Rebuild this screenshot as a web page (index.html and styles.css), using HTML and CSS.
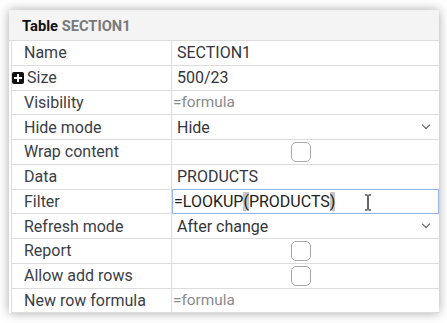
FILE: index.html
```html
<!DOCTYPE html>
<html lang="en">
  <head>
    <meta charset="UTF-8" />
    <title>Table SECTION1</title>
    <link rel="stylesheet" href="styles.css">
  </head>
  <body>
    <div class="panel">
      <div class="panel-header">
        <span class="title">Table</span> <span class="subtitle">SECTION1</span>
      </div>
      <div class="props">
        <div class="label">Name</div>
        <div class="value">SECTION1</div>

        <div class="label label-expand"><span class="plus"></span>Size</div>
        <div class="value">500/23</div>

        <div class="label">Visibility</div>
        <div class="value placeholder">=formula</div>

        <div class="label">Hide mode</div>
        <div class="value select">Hide<span class="chevron"></span></div>

        <div class="label">Wrap content</div>
        <div class="value check"><span class="box"></span></div>

        <div class="label">Data</div>
        <div class="value">PRODUCTS</div>

        <div class="label">Filter</div>
        <div class="value editing">=LOOKUP<span class="match">(</span>PRODUCTS<span class="match">)</span>
          <svg class="ibeam" width="8" height="17" viewBox="0 0 8 17">
            <path d="M1 1h2.5M4.5 1H7M4 1.5v14M1 16h2.5M4.5 16H7" stroke="#000" stroke-width="1.2" fill="none"/>
          </svg>
        </div>

        <div class="label">Refresh mode</div>
        <div class="value select">After change<span class="chevron"></span></div>

        <div class="label">Report</div>
        <div class="value check"><span class="box"></span></div>

        <div class="label">Allow add rows</div>
        <div class="value check"><span class="box"></span></div>

        <div class="label">New row formula</div>
        <div class="value placeholder">=formula</div>
      </div>
    </div>
  </body>
</html>
```

FILE: styles.css
```css
* {
  margin: 0;
  padding: 0;
  box-sizing: border-box;
}

html,
body {
  height: 323px;
}

body {
  font-family: Roboto, 'Liberation Sans', sans-serif;
  background: #fff;
  padding: 10px 8px 10px 9px;
}

.panel {
  width: 430px;
  background: #fff;
  box-shadow: 0 0 10px rgba(0, 0, 0, 0.34);
}

.panel-header {
  height: 31px;
  background: #f4f4f4;
  border-bottom: 1px solid #dcdcdc;
  padding: 7px 0 0 13px;
  font-size: 14.7px;
  font-weight: 700;
}

.title {
  color: #111;
}

.subtitle {
  color: #7a7a7a;
}

.props {
  display: grid;
  grid-template-columns: 160px 1fr;
  margin-left: 2px;
  border-left: 1px solid #dcdcdc;
  font-size: 16px;
  color: #3a3e47;
}

.label,
.value {
  height: 24.75px;
  border-bottom: 1px solid #dcdcdc;
  display: flex;
  align-items: center;
  white-space: nowrap;
}

.label {
  padding-left: 12px;
  border-right: 1px solid #dcdcdc;
}

.label-expand {
  padding-left: 0;
  gap: 3px;
}

.plus {
  width: 12px;
  height: 12px;
  background: #111;
  border-radius: 2px;
  position: relative;
}

.plus::before,
.plus::after {
  content: '';
  position: absolute;
  background: #fff;
}

.plus::before {
  left: 2px;
  top: 5px;
  width: 8px;
  height: 2px;
}

.plus::after {
  left: 5px;
  top: 2px;
  width: 2px;
  height: 8px;
}

.value {
  padding-left: 5px;
  color: #33363c;
}

.placeholder {
  font-size: 15.4px;
  color: #8a8a8a;
  padding-left: 1px;
}

.select {
  justify-content: space-between;
  padding-right: 10px;
}

.chevron {
  width: 6px;
  height: 6px;
  border-right: 1.5px solid #555;
  border-bottom: 1.5px solid #555;
  transform: rotate(45deg);
  margin-top: -4px;
}

.check {
  justify-content: center;
  padding-right: 14px;
}

.box {
  width: 20px;
  height: 20px;
  border: 1px solid #a8a8a8;
  border-radius: 5px;
  background: #fff;
}

.editing {
  position: relative;
  border: 1.5px solid #93b6ee;
  margin-top: -1px;
  height: 25.75px;
  padding-left: 1px;
  color: #222;
}

.match {
  background: #c6c6c6;
}

.ibeam {
  position: absolute;
  left: 191px;
  top: 4px;
}
```
